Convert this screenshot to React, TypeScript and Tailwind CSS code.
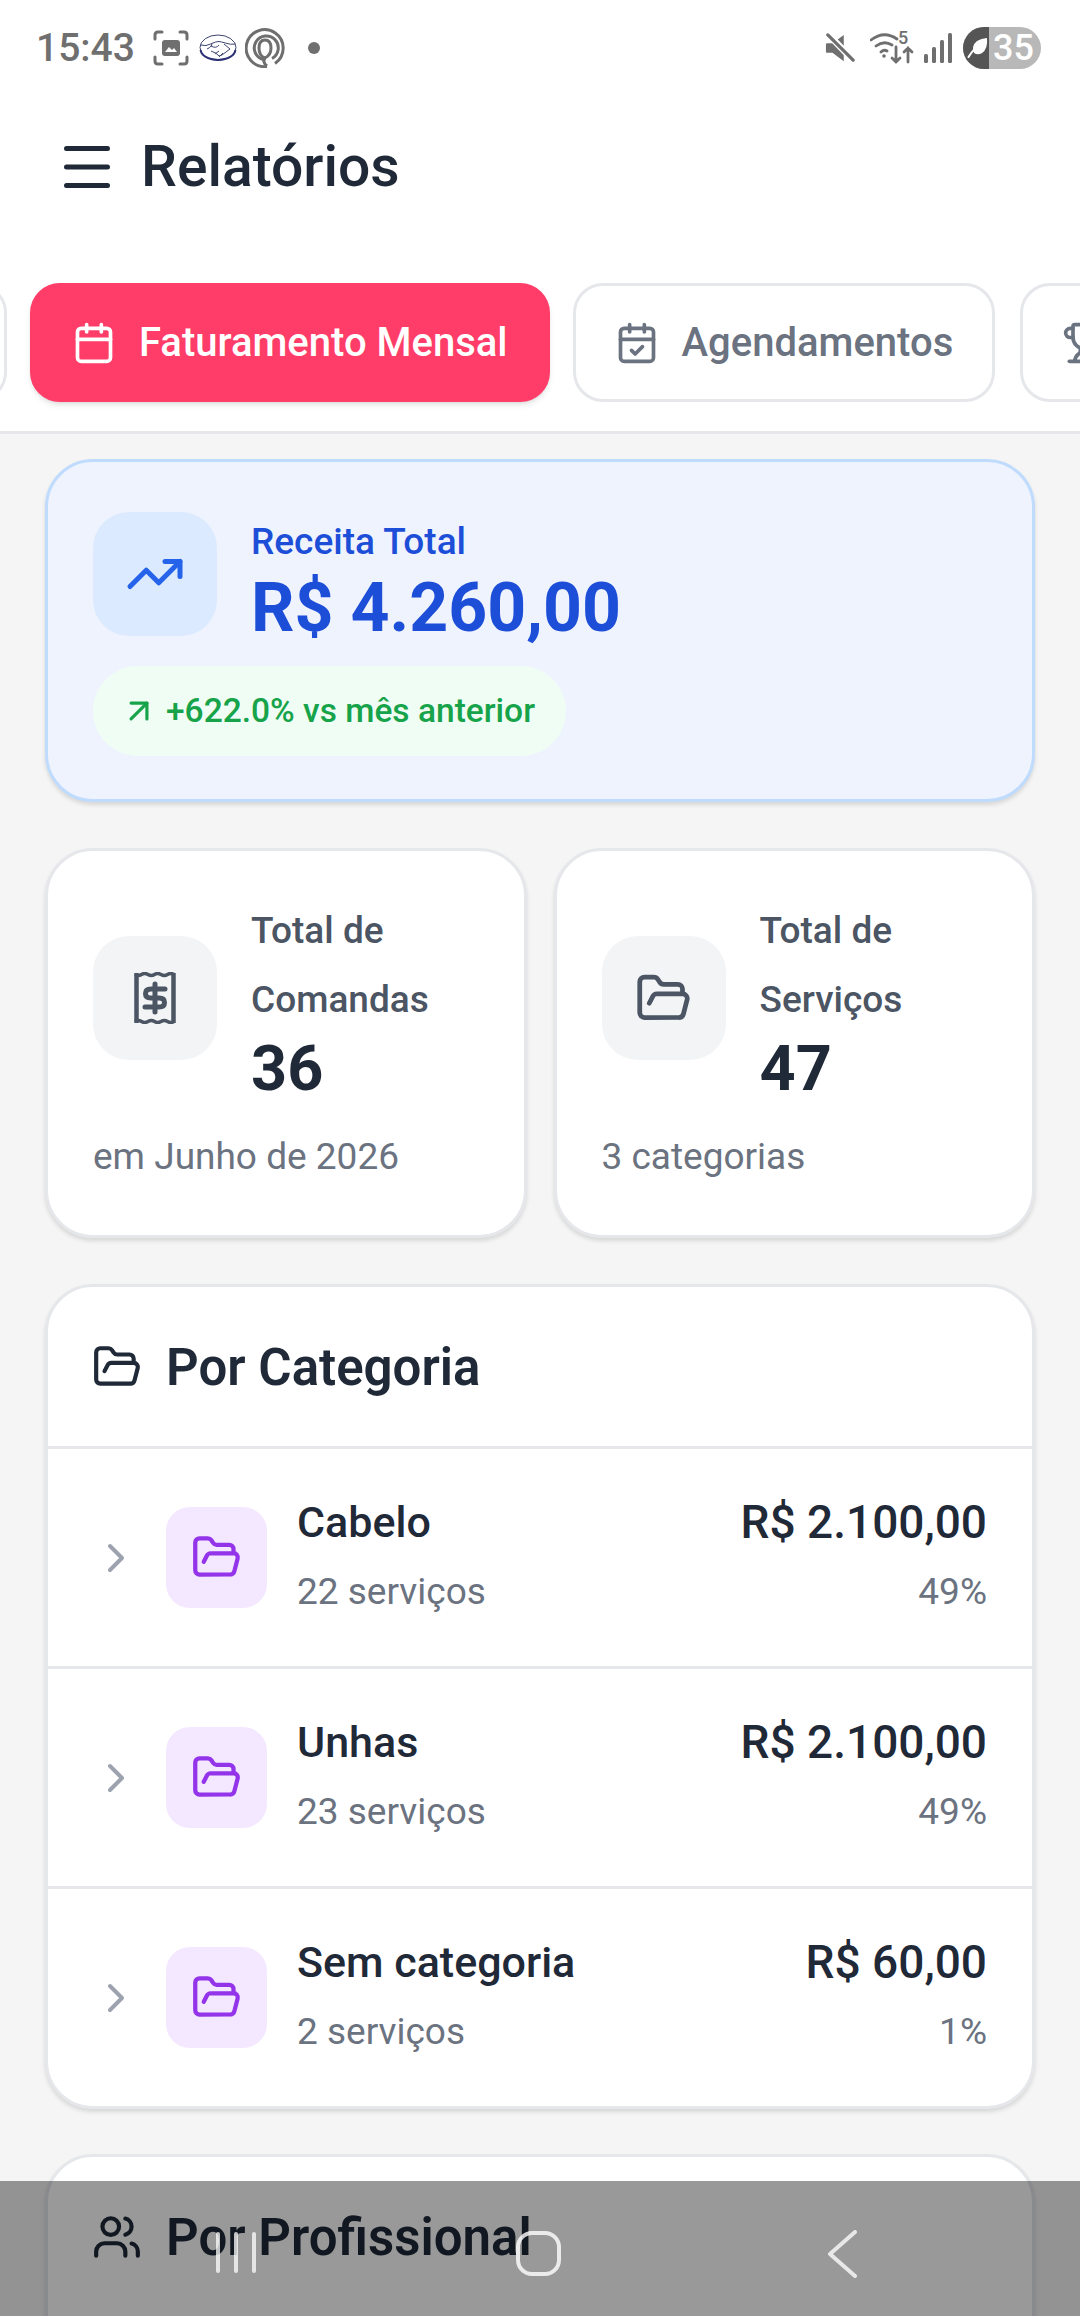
import type { ReactNode } from "react";
import { Calendar, CalendarCheck, Trophy, TrendingUp, ArrowUpRight, FolderOpen, ChevronRight, Users } from "lucide-react";

function ReceiptIcon() {
  return (
    <svg width="42" height="52" viewBox="0 0 42 52" fill="none" stroke="#4b5563" strokeWidth="4.500">
      <path d="M2.500 1v50M39.500 1v50" />
      <path d="M1 2.500q3.300 2 6.500 0t6.500 0t6.500 0t6.500 0t6.500 0t6.500 0M1 49.500q3.300-2 6.500 0t6.500 0t6.500 0t6.500 0t6.500 0t6.500 0" strokeWidth="3.500" />
      <path d="M31 17H17q-5.500 0-5.500 4.500T17 26h8q5.500 0 5.500 4.500T25 35H11M21 12v28" strokeLinecap="round" strokeWidth="5" />
    </svg>
  );
}

function StatusBar() {
  return (
    <div className="flex h-[96px] items-center justify-between pl-[36px] pr-[39px] text-[#6f6f6f]">
      <div className="flex items-center">
        <span className="text-[39px] font-medium leading-none">15:43</span>
        <svg className="ml-[18px]" width="36" height="36" viewBox="0 0 36 36" fill="none" stroke="#6f6f6f" strokeWidth="3" strokeLinecap="round">
          <path d="M2 9V5q0-3 3-3h4M27 2h4q3 0 3 3v4M34 27v4q0 3-3 3h-4M9 34H5q-3 0-3-3v-4" />
          <rect x="9" y="10" width="18" height="16" rx="3" fill="#6f6f6f" stroke="none" />
          <path d="M12 22l4-5 3 3 2-2 3 4z" fill="#fff" stroke="none" />
        </svg>
        <svg className="ml-[10px]" width="38" height="28" viewBox="0 0 38 28" fill="none" stroke="#3d4470" strokeWidth="1">
          <ellipse cx="19" cy="13.500" rx="18" ry="12.500" fill="#fff" />
          <path d="M1.500 16q2 9 17.500 10q15.500-1 17.500-10" strokeWidth="2" stroke="#2d3277" />
          <path d="M1.500 11q6 1.500 10-1l5-2q4-1 6 0l4 1q5 2 10 1M8 15q3-1 5-4M12 17q6 2 8 5l3-1l8-6l-6-5M13 10l-1 2q5 3 8-1M16 20l4-3M20 23l4-4" />
        </svg>
        <svg className="ml-[8px]" width="40" height="40" viewBox="0 0 40 40" fill="none" stroke="#6f6f6f" strokeWidth="3">
          <path d="M22 38.500A18.500 18.500 0 1 1 30 35.500" />
          <path d="M18 31.500A12 12 0 1 1 27 30.500" />
          <path d="M20 30q-6-2-6-10q0-8 6-8t6 8q0 7-6 10q-3 4 2 8" />
        </svg>
        <span className="ml-[23px] h-[12px] w-[12px] rounded-full bg-[#6f6f6f]" />
      </div>
      <div className="flex items-center">
        <svg width="30" height="30" viewBox="0 0 32 32" fill="#6f6f6f">
          <path d="M2 11h6l12-9v28L8 21H2q-1 0-1-1v-8q0-1 1-1z" />
          <path d="M3 1l28 29" stroke="#fff" strokeWidth="7" />
          <path d="M3 2l27 27" stroke="#6f6f6f" strokeWidth="3.500" strokeLinecap="round" />
        </svg>
        <div className="relative ml-[15px] h-[34px] w-[46px]">
          <svg width="46" height="34" viewBox="0 0 46 34" fill="none" stroke="#6f6f6f" strokeWidth="2.800" strokeLinecap="round">
            <path d="M1 9q13-10 26-1M6 15q8-6 16-1M11 21q3-3 6-1" />
            <circle cx="14" cy="25" r="1.800" fill="#6f6f6f" stroke="none" />
            <path d="M26 16v15M22 27l4 4l4-4M38 31V17M34 21l4-4l4 4" />
          </svg>
          <span className="absolute left-[28px] top-[-3px] text-[18px] font-medium leading-[20px] text-[#6f6f6f]">5</span>
        </div>
        <svg className="ml-[8px]" width="28" height="30" viewBox="0 0 28 30" fill="#6f6f6f">
          <rect x="0" y="21" width="4" height="9" rx="1.500" />
          <rect x="8" y="14" width="4" height="16" rx="1.500" />
          <rect x="16" y="7" width="4" height="23" rx="1.500" />
          <rect x="24" y="0" width="4" height="30" rx="1.500" />
        </svg>
        <div className="relative ml-[11px] flex h-[42px] w-[78px] overflow-hidden rounded-full bg-[#b8b8b8]">
          <div className="h-full w-[26px] bg-[#555555]" />
          <span className="ml-[4px] text-[36px] font-medium leading-[42px] text-white">35</span>
          <svg className="absolute left-[4px] top-[10px]" width="21" height="21" viewBox="0 0 21 21">
            <path d="M20 1q1 11-5 15q-4 2.500-8 0Q4 9 10 4q4-2.500 10-3z" fill="#fff" />
            <path d="M1.500 20Q7 11 14 7" fill="none" stroke="#fff" strokeWidth="2" strokeLinecap="round" />
          </svg>
        </div>
      </div>
    </div>
  );
}

function Tab({ icon, label, active, className = "" }: { icon?: ReactNode; label?: string; active?: boolean; className?: string }) {
  return (
    <div
      className={`flex h-[119px] shrink-0 items-center gap-[23px] rounded-[30px] border-[3px] px-[39px] text-[40px] font-medium ${
        active ? "border-[#ff3d68] bg-[#ff3d68] text-white shadow-md" : "border-[#e5e7eb] bg-white text-[#6b7280]"
      } ${className}`}
    >
      {icon}
      {label && <span className="whitespace-nowrap">{label}</span>}
    </div>
  );
}

const cardShadow = "shadow-[0_3px_4px_rgba(0,0,0,0.12)]";

function StatCard({ icon, l1, l2, value, foot }: { icon: ReactNode; l1: string; l2: string; value: string; foot: string }) {
  return (
    <div className={`h-[390px] rounded-[48px] border-[3px] border-[#e5e7eb] bg-white px-[45px] pt-[45px] ${cardShadow}`}>
      <div className="flex items-center gap-[34px]">
        <div className="mb-[3px] flex h-[124px] w-[124px] shrink-0 items-center justify-center rounded-[36px] bg-[#f3f4f6]">{icon}</div>
        <div>
          <div className="text-[37px] font-medium leading-[69px] text-[#4b5563]">{l1}</div>
          <div className="text-[37px] font-medium leading-[69px] text-[#4b5563]">{l2}</div>
          <div className="text-[63px] font-bold leading-[69px] text-[#1f2937]">{value}</div>
        </div>
      </div>
      <div className="mt-[27px] text-[37px] leading-[54px] text-[#6b7280]">{foot}</div>
    </div>
  );
}

function CategoryRow({ name, sub, price, pct }: { name: string; sub: string; price: string; pct: string }) {
  return (
    <div className="flex h-[220px] items-center border-t-[3px] border-[#e5e7eb] pl-[44px] pr-[45px]">
      <ChevronRight size={48} strokeWidth={2} className="mr-[26px] shrink-0 text-[#9ca3af]" />
      <div className="mr-[30px] flex h-[101px] w-[101px] shrink-0 items-center justify-center rounded-[24px] bg-[#f3e8ff]">
        <FolderOpen size={51} strokeWidth={2} className="text-[#9333ea]" />
      </div>
      <div className="flex flex-1 justify-between">
        <div>
          <div className="text-[43px] font-medium leading-[67px] text-[#1f2937]">{name}</div>
          <div className="text-[37px] leading-[71px] text-[#6b7280]">{sub}</div>
        </div>
        <div className="text-right">
          <div className="text-[46px] font-medium leading-[67px] text-[#1f2937]">{price}</div>
          <div className="text-[37px] leading-[71px] text-[#6b7280]">{pct}</div>
        </div>
      </div>
    </div>
  );
}

export default function App() {
  return (
    <div className="relative h-[2316px] w-[1080px] overflow-hidden bg-[#f5f5f5] font-['Roboto',sans-serif]">
      <div className="border-b-[3px] border-[#e5e7eb] bg-white">
        <StatusBar />
        <div className="flex h-[141px] items-center pl-[64px]">
          <svg width="46" height="42" viewBox="0 0 46 42" fill="none" stroke="#1f2937" strokeWidth="5" strokeLinecap="round">
            <path d="M2.500 2.500h41M2.500 21h41M2.500 39.500h41" />
          </svg>
          <h1 className="ml-[31px] text-[57px] font-medium text-[#1f2937]">Relatórios</h1>
        </div>
        <div className="flex h-[194px] gap-[23px] overflow-hidden pl-[31px] pt-[46px]">
          <div className="-ml-[99px] h-[119px] w-[75px] shrink-0 rounded-[30px] border-[3px] border-[#e5e7eb] bg-white" />
          <Tab active icon={<Calendar size={44} strokeWidth={2} />} label="Faturamento Mensal" />
          <Tab icon={<CalendarCheck size={44} strokeWidth={2} />} label="Agendamentos" />
          <Tab icon={<Trophy size={44} strokeWidth={2} />} className="ml-[2px] w-[200px]" />
        </div>
      </div>
      <div className="flex flex-col gap-[46px] px-[45px] pt-[25px]">
        <div className={`h-[343px] rounded-[48px] border-[3px] border-[#bfdbfe] bg-[#eff3fe] px-[45px] pt-[50px] ${cardShadow}`}>
          <div className="flex items-start gap-[34px]">
            <div className="flex h-[124px] w-[124px] items-center justify-center rounded-[36px] bg-[#dbeafe]">
              <TrendingUp size={60} strokeWidth={2} className="text-[#2563eb]" />
            </div>
            <div className="pt-[3px]">
              <div className="text-[37px] font-medium leading-[54px] text-[#1d4ed8]">Receita Total</div>
              <div className="text-[68px] font-bold leading-[78px] text-[#1d4ed8]">R$ 4.260,00</div>
            </div>
          </div>
          <div className="mt-[19px] flex h-[90px] w-fit items-center gap-[8px] rounded-full bg-[#f0fdf4] pl-[27px] pr-[31px] text-[33.500px] font-medium text-[#16a34a]">
            <ArrowUpRight size={38} strokeWidth={2} />
            <span>+622.0% vs mês anterior</span>
          </div>
        </div>

        <div className="grid grid-cols-2 gap-[27px]">
          <StatCard icon={<ReceiptIcon />} l1="Total de" l2="Comandas" value="36" foot="em Junho de 2026" />
          <StatCard icon={<FolderOpen size={57} strokeWidth={2} className="text-[#4b5563]" />} l1="Total de" l2="Serviços" value="47" foot="3 categorias" />
        </div>

        <div className={`rounded-[48px] border-[3px] border-[#e5e7eb] bg-white ${cardShadow}`}>
          <div className="flex h-[159px] items-center gap-[24px] pl-[44px]">
            <FolderOpen size={50} strokeWidth={2} className="text-[#1f2937]" />
            <h2 className="mt-[3px] text-[51px] font-semibold text-[#1f2937]">Por Categoria</h2>
          </div>
          <CategoryRow name="Cabelo" sub="22 serviços" price="R$ 2.100,00" pct="49%" />
          <CategoryRow name="Unhas" sub="23 serviços" price="R$ 2.100,00" pct="49%" />
          <CategoryRow name="Sem categoria" sub="2 serviços" price="R$ 60,00" pct="1%" />
        </div>

        <div className={`-mt-[1px] h-[500px] rounded-[48px] border-[3px] border-[#e5e7eb] bg-white ${cardShadow}`}>
          <div className="flex h-[159px] items-center gap-[24px] pl-[44px]">
            <Users size={50} strokeWidth={2} className="text-[#1f2937]" />
            <h2 className="mt-[3px] text-[51px] font-semibold text-[#1f2937]">Por Profissional</h2>
          </div>
        </div>
      </div>

      <div className="absolute inset-x-0 bottom-0 h-[135px] bg-black/40">
        <div className="absolute left-[216px] top-[51px] flex gap-[14px]">
          <span className="h-[41px] w-[4px] rounded-full bg-white/75" />
          <span className="h-[41px] w-[4px] rounded-full bg-white/75" />
          <span className="h-[41px] w-[4px] rounded-full bg-white/75" />
        </div>
        <div className="absolute left-[516px] top-[50px] h-[45px] w-[45px] rounded-[16px] border-[4px] border-white/80" />
        <svg className="absolute left-[826px] top-[49px]" width="32" height="48" viewBox="0 0 32 48" fill="none" stroke="#e8e8e8" strokeWidth="4" strokeLinecap="round" strokeLinejoin="round">
          <path d="M29 2L4 24l25 22" />
        </svg>
      </div>
    </div>
  );
}
